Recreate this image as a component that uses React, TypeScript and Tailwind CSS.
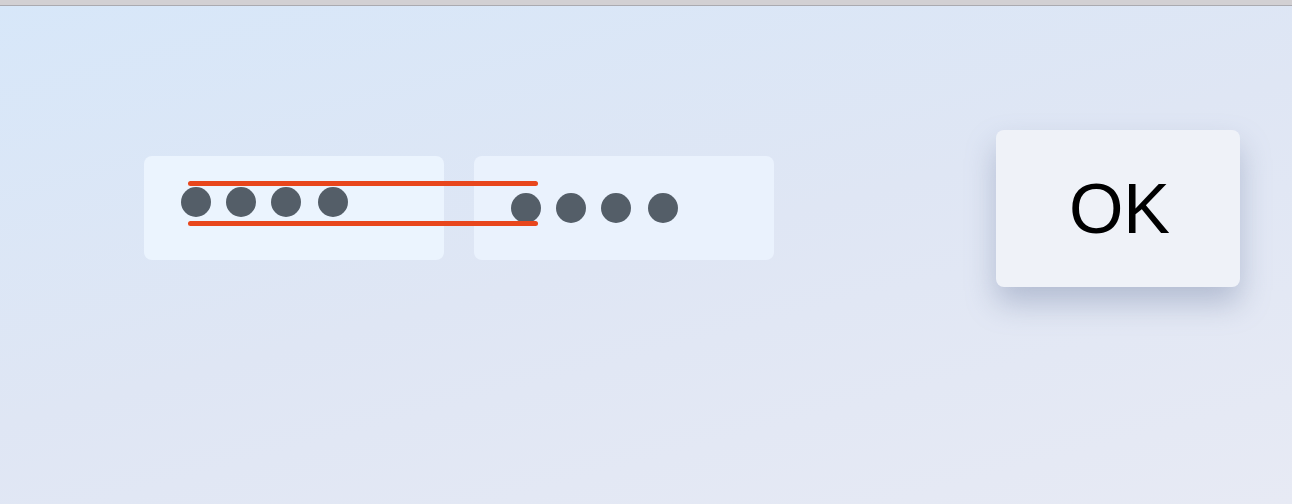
import React from 'react';

const Dots = () => (
  <div className="flex gap-[15px]">
    <span className="h-[30px] w-[30px] rounded-full bg-[#545e68]" />
    <span className="h-[30px] w-[30px] rounded-full bg-[#545e68]" />
    <span className="h-[30px] w-[30px] rounded-full bg-[#545e68]" />
    <span className="ml-[2px] h-[30px] w-[30px] rounded-full bg-[#545e68]" />
  </div>
);

export default function App() {
  return (
    <div className="flex h-[504px] w-[1292px] flex-col overflow-hidden bg-[linear-gradient(165deg,#d7e7f9_0%,#dfe6f4_50%,#e7eaf4_100%)]">
      {/* window chrome strip */}
      <div className="h-[6px] bg-[#d2d0d3] border-b border-[#aaaab0]" />

      <div className="relative flex items-start pt-[124px] pl-[144px] pr-[52px]">
        {/* pin fields */}
        <div className="mt-[26px] flex gap-[30px]">
          <div className="flex h-[104px] w-[300px] items-start rounded-lg bg-[#ebf4fe] pl-[37px] pt-[31px]">
            <Dots />
          </div>
          <div className="flex h-[104px] w-[300px] items-center rounded-lg bg-[#eaf2fd] pl-[37px]">
            <Dots />
          </div>
        </div>

        <button className="ml-auto flex h-[157px] w-[244px] items-center justify-center rounded-lg bg-[#eff2f8] pl-[3px] font-['Liberation_Sans',Arial,sans-serif] text-[70px] leading-none text-black shadow-[0_16px_30px_rgba(110,125,160,0.4)]">
          OK
        </button>

        {/* red strike marks over the first field */}
        <div className="absolute left-[188px] top-[175px] h-[5px] w-[350px] rounded-sm bg-[#e8461c]" />
        <div className="absolute left-[188px] top-[215px] h-[5px] w-[350px] rounded-sm bg-[#e8461c]" />
      </div>
    </div>
  );
}
